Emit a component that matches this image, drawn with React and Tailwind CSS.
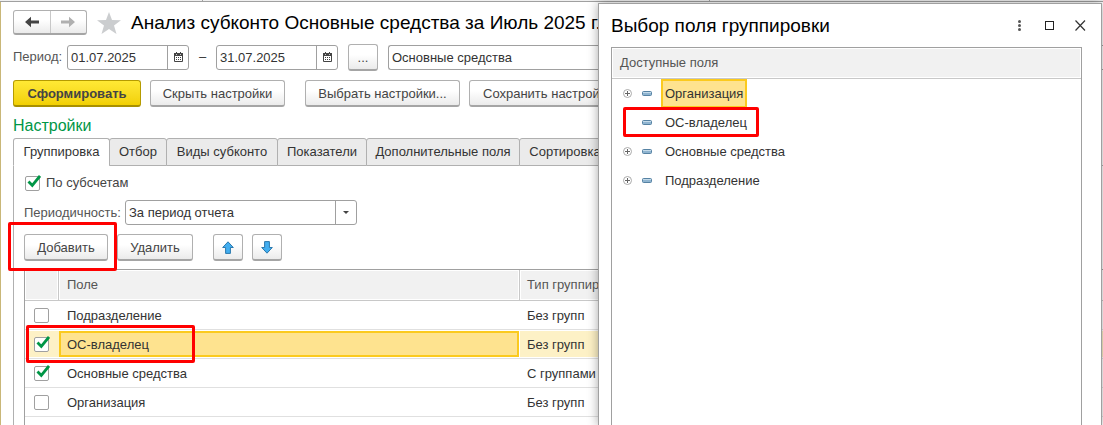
import React, { useState } from 'react';

const TABS = [
  { name: 'Группировка', width: 'w-[97px]' },
  { name: 'Отбор', width: 'w-[58px]' },
  { name: 'Виды субконто', width: 'w-[112px]' },
  { name: 'Показатели', width: 'w-[90px]' },
  { name: 'Дополнительные поля', width: 'w-[154px]' },
  { name: 'Сортировка', width: 'w-[92px]' },
];

const ROWS = [
  { field: 'Подразделение', type: 'Без групп', checked: false },
  { field: 'ОС-владелец', type: 'Без групп', checked: true, marked: true },
  { field: 'Основные средства', type: 'С группами', checked: true },
  { field: 'Организация', type: 'Без групп', checked: false },
];

const FIELDS = [
  { name: 'Организация', expandable: true, selected: true },
  { name: 'ОС-владелец', marked: true },
  { name: 'Основные средства', expandable: true },
  { name: 'Подразделение', expandable: true },
];

const GRAY = 'border-[#b0b0b0] border-b-[#a5a5a5] from-white from-40% to-[#ebebeb] text-[#444]';
const YELLOW = 'border-[#b59b00] border-b-[#a89000] from-[#ffe934] to-[#f2d000] font-bold text-[#444]';

const Arrow = ({ flip, className }) => (
  <svg width="14" height="12" viewBox="0 0 14 12" className={`${flip ? 'rotate-180' : ''} ${className}`}>
    <path d="M0 6 L6 0.8 V4.6 H14 V7.4 H6 V11.2 Z" fill="currentColor" />
  </svg>
);

const BlueArrow = ({ down }) => (
  <svg width="12" height="13" viewBox="0 0 12 13" className={down ? 'rotate-180' : ''}>
    <path d="M6 0.8 L11.3 6.5 H8.4 V12.4 H3.6 V6.5 H0.7 Z" fill="#42aef0" stroke="#2a78ad" strokeWidth="1" strokeLinejoin="round" />
  </svg>
);

const CalendarIcon = () => (
  <svg width="9" height="10" viewBox="0 0 9 10">
    <path d="M0.5 2 H8.5 V9.5 H0.5 Z" fill="#fff" stroke="#444" />
    <path d="M0 1 H9 V4 H0 Z" fill="#444" />
    <path d="M2 0 H3 V2 H2 Z M6 0 H7 V2 H6 Z" fill="#444" />
    <path d="M2 2.5 H3 M6 2.5 H7" stroke="#ccc" strokeWidth="1" />
    <path d="M2 5.5 H7 M2 7.5 H7" stroke="#444" strokeDasharray="1 1" />
  </svg>
);

const Button = ({ className = 'pt-[2px]', look = GRAY, children, ...props }) => (
  <button
    className={`flex h-[27px] shrink-0 items-center justify-center rounded-[3px] border border-b-2 bg-linear-to-b whitespace-nowrap ${look} ${className}`}
    {...props}
  >
    {children}
  </button>
);

const Checkbox = ({ ...props }) => (
  <span className="relative flex size-[15px] shrink-0">
    <input type="checkbox" className="peer size-[15px] appearance-none rounded-[2px] border border-[#a0a0a0] bg-white" {...props} />
    <svg width="14" height="13" viewBox="0 0 14 13" className="pointer-events-none absolute -top-px left-[2px] hidden peer-checked:block">
      <path d="M1.5 6.5 L5.3 10.5 L13 1" fill="none" stroke="#009646" strokeWidth="2.8" />
    </svg>
  </span>
);

const DateField = ({ label, defaultValue }) => (
  <div className="flex h-[25px] w-[122px] shrink-0 rounded-[3px] border border-[#a0a0a0]">
    <input aria-label={label} defaultValue={defaultValue} className="min-w-0 flex-1 px-[3px] pt-[2px] outline-none" />
    <button aria-label="Календарь" className="flex w-[21px] items-center justify-center border-l border-[#a0a0a0]">
      <CalendarIcon />
    </button>
  </div>
);

const Marker = ({ className }) => (
  <span className={`pointer-events-none absolute z-10 rounded-[2px] border-3 border-[#ff0000] ${className}`} />
);

const FieldDialog = () => (
  <section role="dialog" aria-label="Выбор поля группировки" className="absolute top-[3px] right-px -bottom-px z-20 flex w-[504px] flex-col border border-[#a0a0a0] bg-white px-3 shadow-[0_0_10px_rgba(0,0,0,0.35)]">
    <header className="flex h-[43px] items-center pr-[3px]">
      <h2 className="flex-1 text-[19px] text-black">Выбор поля группировки</h2>
      <div className="flex items-center gap-5">
        <button aria-label="Ещё">
          <svg width="9" height="11" viewBox="0 0 9 11" fill="#555">
            <circle cx="3.5" cy="1.5" r="1.5" />
            <circle cx="3.5" cy="5.5" r="1.5" />
            <circle cx="3.5" cy="9.5" r="1.5" />
          </svg>
        </button>
        <button aria-label="Развернуть" className="size-[9px] border border-[#222]" />
        <button aria-label="Закрыть">
          <svg width="12" height="11" viewBox="0 0 12 11">
            <path d="M1.5 0.5 L11 10.5 M11 0.5 L1.5 10.5" stroke="#333" strokeWidth="1.2" />
          </svg>
        </button>
      </div>
    </header>
    <div className="mr-[7px] flex-1 border-x border-t border-[#a0a0a0]">
      <div className="border-b border-[#c8c8c8] p-px">
        <div className="flex h-[28px] items-center bg-[#f1f1f1] pl-[7px] text-[#555]">Доступные поля</div>
      </div>
      <ul>
        {FIELDS.map(f => (
          <li key={f.name} className="relative flex h-[29px] items-center pl-[11px]">
            {f.expandable ? (
              <button aria-label="Раскрыть">
                <svg width="9" height="9" viewBox="0 0 9 9" fill="none">
                  <circle cx="4.5" cy="4.5" r="4" stroke="#aaa" />
                  <path d="M2 4.5 H7 M4.5 2 V7" stroke="#666" />
                </svg>
              </button>
            ) : <span className="w-[9px]" />}
            <svg width="10" height="5" viewBox="0 0 10 5" className="ml-[10px]">
              <rect x="0.5" y="0.5" width="9" height="4" rx="1" fill="#8fb4d0" stroke="#5682a3" />
              <path d="M1 1.5 H9" stroke="#c5dbea" />
            </svg>
            <span className={`ml-[9px] flex h-[29px] items-center border-2 px-[2px] ${f.selected ? 'border-[#fbca1e] bg-[#fee38f]' : 'border-transparent'}`}>{f.name}</span>
            {f.marked && <Marker className="-top-px bottom-0 left-[11px] w-[136px]" />}
          </li>
        ))}
      </ul>
    </div>
  </section>
);

export default function App() {
  const [tab, setTab] = useState(TABS[0].name);

  return (
    <div className="relative flex min-h-screen flex-col overflow-hidden bg-white font-['Liberation_Sans',Arial,sans-serif] text-[13px] leading-4 text-[#333]">
      <div className="flex h-[2px] border-b border-[#a0a0a0] bg-[#f0f0f0]">
        <span className="w-[203px] border-r border-[#a0a0a0]" />
        <span className="w-[507px] border-r border-[#a0a0a0]" />
      </div>
      <main className="flex flex-1 flex-col border-l border-[#c9b778] pt-2 pl-3">
        <div className="flex h-[25px] items-center">
          <div className="flex h-[25px] w-[74px] shrink-0 rounded-[3px] border border-[#b0b0b0] border-b-2 border-b-[#a5a5a5] bg-linear-to-b from-white from-40% to-[#ebebeb]">
            <button aria-label="Назад" className="flex flex-1 items-center justify-center border-r border-[#c8c8c8]"><Arrow className="text-[#444]" /></button>
            <button aria-label="Вперёд" className="flex flex-1 items-center justify-center"><Arrow flip className="text-[#b0b0b0]" /></button>
          </div>
          <button aria-label="В избранное" className="ml-[10px]">
            <svg width="24" height="22" viewBox="0 0 24 22">
              <path d="M12 0 L15 8 L24 8.3 L17 13.5 L19.5 22 L12 17 L4.5 22 L7 13.5 L0 8.3 L9 8 Z" fill="#cbcdcf" />
            </svg>
          </button>
          <h1 className="ml-[10px] text-[19px] whitespace-nowrap text-black">Анализ субконто Основные средства за Июль 2025 г.</h1>
        </div>

        <div className="mt-[9px] flex h-[26px] items-center">
          <span className="w-[54px] shrink-0 text-[#555]">Период:</span>
          <DateField label="Начало периода" defaultValue="01.07.2025" />
          <span className="w-[27px] shrink-0 text-center">–</span>
          <DateField label="Конец периода" defaultValue="31.07.2025" />
          <Button className="ml-[10px] w-[30px] pt-[2px]" aria-label="Выбрать период">...</Button>
          <input aria-label="Вид субконто" defaultValue="Основные средства" className="ml-[10px] h-[25px] min-w-0 flex-1 rounded-l-[3px] border border-r-0 border-[#a0a0a0] px-[3px] outline-none" />
        </div>

        <div className="mt-[10px] flex">
          <Button look={YELLOW} className="mr-[9px] w-[128px] pt-[2px]">Сформировать</Button>
          <Button className="mr-5 w-[135px] pt-[2px]">Скрыть настройки</Button>
          <Button className="mr-[9px] w-[155px] pt-[2px]">Выбрать настройки...</Button>
          <Button className="px-[13px] pt-[2px]">Сохранить настройки...</Button>
        </div>

        <h2 className="flex h-[31px] items-center pt-[6px] text-[16px] text-[#009646]">Настройки</h2>

        <div role="tablist" className="flex h-[28px] shrink-0">
          {TABS.map(t => (
            <button
              key={t.name}
              role="tab"
              aria-selected={t.name === tab}
              onClick={() => setTab(t.name)}
              className={`-mr-px shrink-0 rounded-t-[3px] border border-[#b0b0b0] whitespace-nowrap ${t.width} ${t.name === tab ? 'border-b-white bg-white' : 'bg-[#ebebeb]'}`}
            >
              {t.name}
            </button>
          ))}
          <span className="flex-1 border-b border-[#b0b0b0]" />
        </div>

        <div className="flex flex-1 flex-col border-l border-[#b0b0b0] pl-[10px]">
          <label className="mt-[9px] ml-px flex h-[16px] items-center gap-[6px] text-[#444]">
            <Checkbox defaultChecked />
            По субсчетам
          </label>

          <div className="mt-[9px] flex h-[25px] items-center">
            <label htmlFor="period" className="w-[101px] text-[#555]">Периодичность:</label>
            <div className="grid h-[25px] w-[232px] rounded-[3px] border border-[#a0a0a0]">
              <select id="period" className="col-start-1 row-start-1 appearance-none px-[3px] outline-none">
                <option>За период отчета</option>
              </select>
              <span className="pointer-events-none col-start-1 row-start-1 flex w-[21px] items-center justify-center justify-self-end border-l border-[#a0a0a0]">
                <svg width="6" height="3" viewBox="0 0 6 3"><path d="M0 0 H6 L3 3 Z" fill="#444" /></svg>
              </span>
            </div>
          </div>

          <div className="mt-[9px] flex h-[27px]">
            <div className="relative mr-[9px]">
              <Button className="w-[84px] pt-[2px]">Добавить</Button>
              <Marker className="-top-3 -right-[9px] -bottom-[10px] -left-4" />
            </div>
            <Button className="mr-5 w-[76px] pt-[2px]">Удалить</Button>
            <Button aria-label="Вверх" className="mr-[9px] w-[30px]"><BlueArrow /></Button>
            <Button aria-label="Вниз" className="w-[30px]"><BlueArrow down /></Button>
          </div>

          <div className="mt-2 flex-1 border-t border-l border-[#a0a0a0]">
            <table className="w-full table-fixed border-separate border-spacing-0 text-left">
              <thead>
                <tr className="text-[#555]">
                  <th className="w-[34px] border-r border-b border-[#c8c8c8] p-px"><div className="h-[28px] bg-[#f1f1f1]" /></th>
                  <th className="w-[461px] border-r border-b border-[#c8c8c8] p-px font-normal"><div className="flex h-[28px] items-center bg-[#f1f1f1] pl-[7px]">Поле</div></th>
                  <th className="border-b border-[#c8c8c8] p-px font-normal"><div className="flex h-[28px] items-center bg-[#f1f1f1] pl-[6px]">Тип группировки</div></th>
                </tr>
              </thead>
              <tbody>
                {ROWS.map(r => (
                  <tr key={r.field}>
                    <td className="relative border-b border-[#e0e0e0] py-px pl-px">
                      <div className={`flex h-[26px] items-center pl-2 ${r.marked ? 'bg-[#fdf1c6]' : ''}`}>
                        <Checkbox defaultChecked={r.checked} aria-label={r.field} />
                      </div>
                      {r.marked && <Marker className="-top-[5px] left-px h-[38px] w-[169px]" />}
                    </td>
                    <td className="border-b border-[#e0e0e0] py-px pr-px">
                      <div className={`flex h-[26px] items-center border-2 pt-[2px] pl-[6px] ${r.marked ? 'border-[#fbca1e] bg-[#fee38f]' : 'border-transparent'}`}>{r.field}</div>
                    </td>
                    <td className="border-b border-[#e0e0e0] py-px">
                      <div className={`flex h-[26px] items-center pt-[2px] pl-[7px] ${r.marked ? 'bg-[#fdf1c6]' : ''}`}>{r.type}</div>
                    </td>
                  </tr>
                ))}
              </tbody>
            </table>
          </div>
        </div>
      </main>
      <FieldDialog />
    </div>
  );
}
